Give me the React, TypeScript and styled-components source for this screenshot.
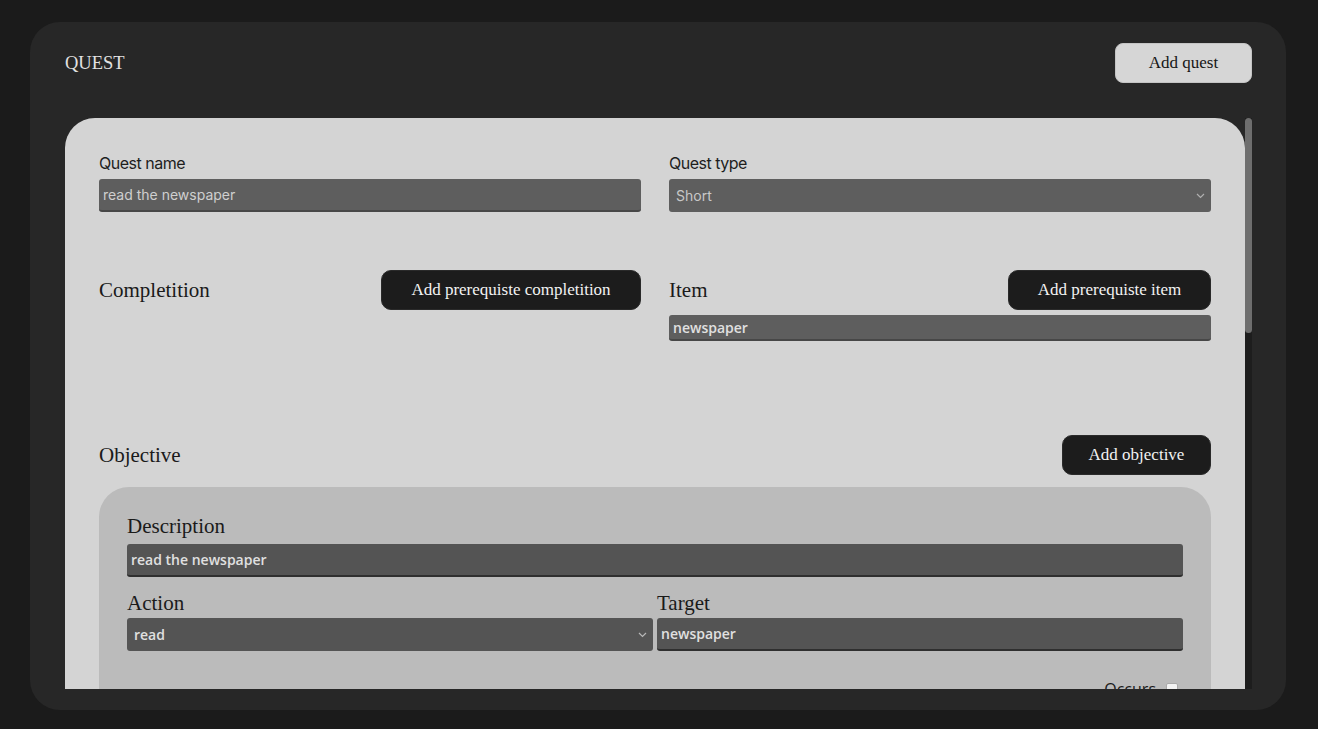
import React from "react";
import styled, { createGlobalStyle } from "styled-components";

const GlobalStyle = createGlobalStyle`
  html, body { margin: 0; padding: 0; background: #1b1b1b; }
  * { box-sizing: border-box; }
`;

const serif = `"Liberation Serif", "Times New Roman", serif`;
const sans = `Inter, "Noto Sans", sans-serif`;
const open = `"Open Sans", "Noto Sans", sans-serif`;

const Page = styled.div`
  width: 1318px;
  height: 729px;
  padding: 22px 32px 19px 30px;
  overflow: hidden;
`;

const Card = styled.div`
  width: 1256px;
  height: 688px;
  background: #272727;
  border-radius: 30px;
  padding: 21px 34px 21px 35px;
  display: flex;
  flex-direction: column;
`;

const Header = styled.div`
  display: flex;
  align-items: center;
  justify-content: space-between;
  height: 40px;
  flex: none;
`;

const Title = styled.h1`
  margin: 0;
  font-family: ${serif};
  font-weight: 400;
  font-size: 18.5px;
  color: #e2e2e2;
`;

const LightButton = styled.button`
  width: 137px;
  height: 40px;
  background: #d6d6d6;
  border: 1px solid #c4c4c4;
  border-radius: 8px;
  font-family: ${serif};
  font-size: 17px;
  color: #151515;
  padding: 0;
`;

const Body = styled.div`
  margin-top: 35px;
  flex: 1;
  min-height: 0;
  display: flex;
`;

const Viewport = styled.div`
  flex: 1;
  overflow: hidden;
`;

const ScrollTrack = styled.div`
  width: 7px;
  flex: none;
  background: #1d1d1d;
`;

const ScrollThumb = styled.div`
  height: 215px;
  background: #6e6e6e;
  border-radius: 4px;
`;

const Panel = styled.div`
  background: #d4d4d4;
  border-radius: 30px;
  padding: 35px 34px;
  min-height: 1516px;
`;

const TwoCols = styled.div<{ $top?: number; $gap?: number }>`
  display: grid;
  grid-template-columns: 1fr 1fr;
  column-gap: ${(p) => p.$gap ?? 28}px;
  margin-top: ${(p) => p.$top ?? 0}px;
  align-items: start;
`;

const Field = styled.div`
  display: flex;
  flex-direction: column;
`;

const Label = styled.label`
  font-family: ${sans};
  font-weight: 400;
  font-size: 16px;
  line-height: 20px;
  letter-spacing: -0.5px;
  color: #1e1e1e;
  margin-bottom: 6px;
`;

const TextInput = styled.input<{ $h?: number; $pad?: number; $dark?: boolean; $open?: boolean }>`
  height: ${(p) => p.$h ?? 33}px;
  width: 100%;
  background: ${(p) => (p.$dark ? "#545454" : "#5e5e5e")};
  border: none;
  border-bottom: 2px solid ${(p) => (p.$dark ? "#2f2f2f" : "#474747")};
  border-radius: 3px;
  padding: 0 0 0 ${(p) => p.$pad ?? 4}px;
  font-family: ${(p) => (p.$open ? open : sans)};
  font-weight: ${(p) => (p.$open ? 600 : 400)};
  font-size: 14px;
  color: ${(p) => (p.$open ? "#e0e0e0" : "#cfcfcf")};
  outline: none;
`;

const SelectWrap = styled.div`
  position: relative;
  width: 100%;
`;

const Select = styled.select<{ $dark?: boolean; $open?: boolean }>`
  appearance: none;
  width: 100%;
  height: 33px;
  background: ${(p) => (p.$dark ? "#545454" : "#5e5e5e")};
  border: none;
  border-radius: 3px;
  padding: 0 0 0 7px;
  font-family: ${(p) => (p.$open ? open : sans)};
  font-weight: ${(p) => (p.$open ? 600 : 400)};
  font-size: 14px;
  color: ${(p) => (p.$open ? "#e0e0e0" : "#c8c8c8")};
  outline: none;
`;

const Chevron = styled.svg`
  position: absolute;
  right: 6px;
  top: 14px;
  width: 9px;
  height: 6px;
  pointer-events: none;
`;

const SectionHead = styled.div`
  display: flex;
  align-items: center;
  justify-content: space-between;
  height: 40px;
`;

const Heading = styled.h2`
  margin: 0;
  font-family: ${serif};
  font-weight: 400;
  font-size: 21px;
  color: #1a1a1a;
`;

const DarkButton = styled.button<{ $w: number }>`
  width: ${(p) => p.$w}px;
  height: 40px;
  background: #1c1c1c;
  border: 1px solid #2a2a2a;
  border-radius: 10px;
  color: #f2f2f2;
  font-family: ${serif};
  font-size: 17px;
  padding: 0;
`;

const ItemList = styled.div`
  margin-top: 5px;
  display: flex;
  flex-direction: column;
`;

const Section = styled.div<{ $top: number }>`
  margin-top: ${(p) => p.$top}px;
`;

const ObjectiveCard = styled.div`
  margin-top: 12px;
  background: #bbbbbb;
  border-radius: 30px;
  padding: 27px 28px 40px 28px;
`;

const CardLabel = styled.label<{ $gapBelow?: number }>`
  display: block;
  font-family: ${serif};
  font-size: 21px;
  line-height: 24px;
  color: #1a1a1a;
  margin-bottom: ${(p) => p.$gapBelow ?? 3}px;
`;

const OptionRow = styled.div`
  display: flex;
  justify-content: flex-end;
  align-items: center;
  gap: 10px;
  margin-top: 28px;
  padding-right: 5px;
  font-family: ${open};
  font-size: 16px;
  line-height: 20px;
  color: #1a1a1a;
`;

const Check = styled.span`
  width: 12px;
  height: 12px;
  background: #f3f3f3;
  border-radius: 2px;
  border: 1px solid #aaa;
`;

const ChevronIcon = ({ color }: { color: string }) => (
  <Chevron viewBox="0 0 9 6">
    <path d="M1 1 L4.5 4.5 L8 1" fill="none" stroke={color} strokeWidth="1.2" />
  </Chevron>
);

export default function App() {
  return (
    <>
      <GlobalStyle />
      <Page>
        <Card>
          <Header>
            <Title>QUEST</Title>
            <LightButton>Add quest</LightButton>
          </Header>
          <Body>
            <Viewport>
              <Panel>
                <TwoCols>
                  <Field>
                    <Label>Quest name</Label>
                    <TextInput defaultValue="read the newspaper" />
                  </Field>
                  <Field>
                    <Label>Quest type</Label>
                    <SelectWrap>
                      <Select defaultValue="Short">
                        <option>Short</option>
                        <option>Long</option>
                      </Select>
                      <ChevronIcon color="#b0b0b0" />
                    </SelectWrap>
                  </Field>
                </TwoCols>

                <TwoCols $top={58}>
                  <Field>
                    <SectionHead>
                      <Heading>Completition</Heading>
                      <DarkButton $w={260}>Add prerequiste completition</DarkButton>
                    </SectionHead>
                  </Field>
                  <Field>
                    <SectionHead>
                      <Heading>Item</Heading>
                      <DarkButton $w={203}>Add prerequiste item</DarkButton>
                    </SectionHead>
                    <ItemList>
                      <TextInput $h={26} $open defaultValue="newspaper" />
                    </ItemList>
                  </Field>
                </TwoCols>

                <Section $top={94}>
                  <SectionHead>
                    <Heading>Objective</Heading>
                    <DarkButton $w={149}>Add objective</DarkButton>
                  </SectionHead>
                  <ObjectiveCard>
                    <CardLabel $gapBelow={6}>Description</CardLabel>
                    <TextInput $dark $open $h={33} defaultValue="read the newspaper" />
                    <TwoCols $gap={4} $top={14}>
                      <Field>
                        <CardLabel>Action</CardLabel>
                        <SelectWrap>
                          <Select $dark $open defaultValue="read">
                            <option>read</option>
                            <option>talk</option>
                          </Select>
                          <ChevronIcon color="#b8b8b8" />
                        </SelectWrap>
                      </Field>
                      <Field>
                        <CardLabel>Target</CardLabel>
                        <TextInput $dark $open defaultValue="newspaper" />
                      </Field>
                    </TwoCols>
                    <OptionRow>
                      <span>Occurs</span>
                      <Check />
                    </OptionRow>
                  </ObjectiveCard>
                </Section>
              </Panel>
            </Viewport>
            <ScrollTrack>
              <ScrollThumb />
            </ScrollTrack>
          </Body>
        </Card>
      </Page>
    </>
  );
}
